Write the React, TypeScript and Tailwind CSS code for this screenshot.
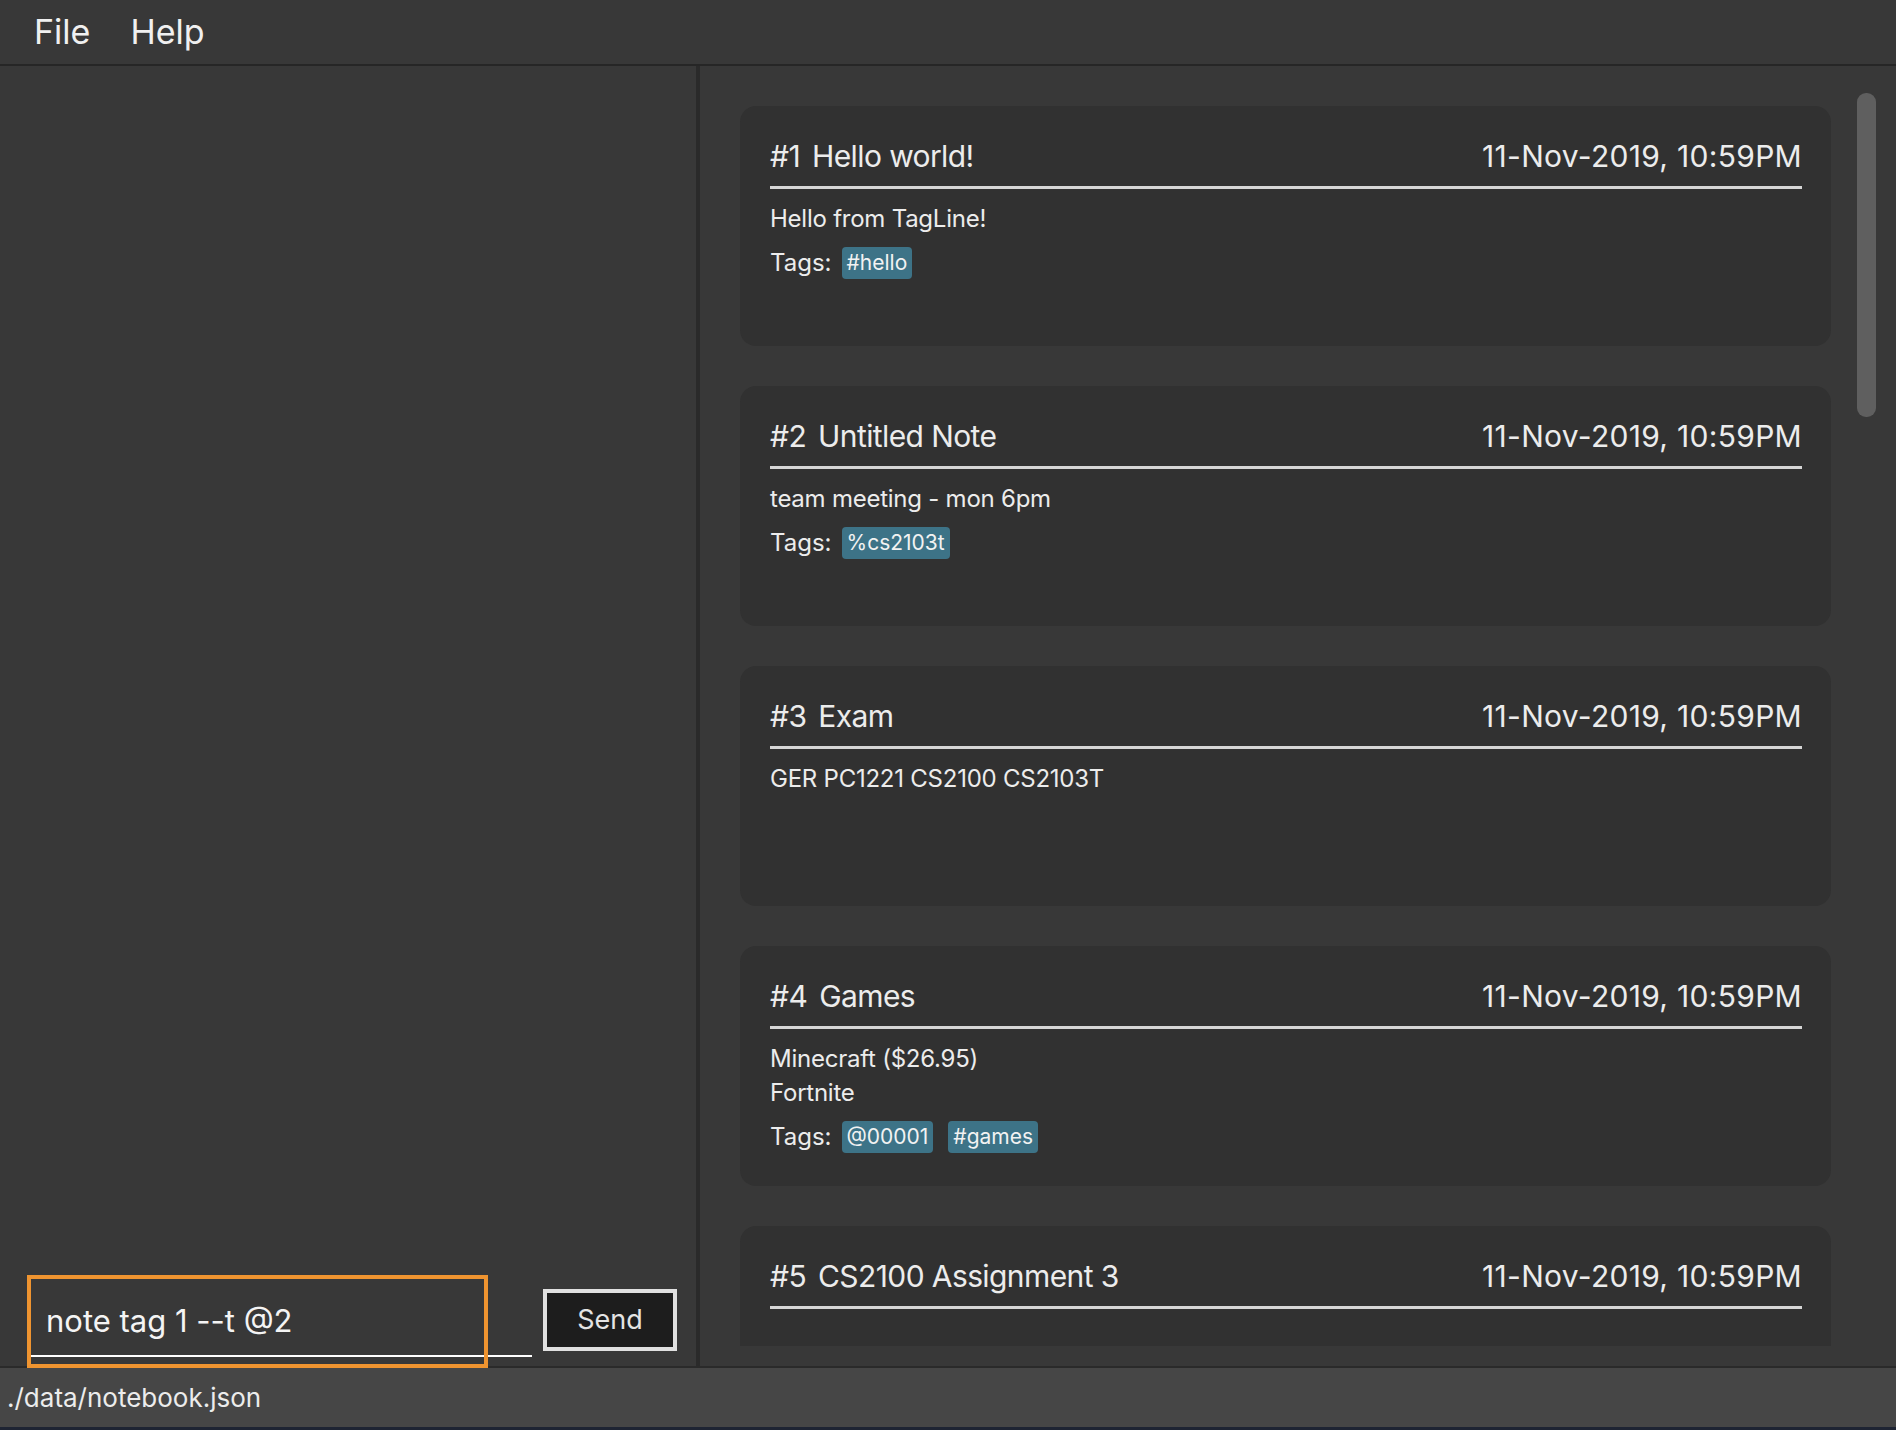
import React from "react";

type Note = {
  id: number;
  title: string;
  date: string;
  body: string[];
  tags: string[];
};

const notes: Note[] = [
  { id: 1, title: "Hello world!", date: "11-Nov-2019, 10:59PM", body: ["Hello from TagLine!"], tags: ["#hello"] },
  { id: 2, title: "Untitled Note", date: "11-Nov-2019, 10:59PM", body: ["team meeting - mon 6pm"], tags: ["%cs2103t"] },
  { id: 3, title: "Exam", date: "11-Nov-2019, 10:59PM", body: ["GER PC1221 CS2100 CS2103T"], tags: [] },
  { id: 4, title: "Games", date: "11-Nov-2019, 10:59PM", body: ["Minecraft ($26.95)", "Fortnite"], tags: ["@00001", "#games"] },
  { id: 5, title: "CS2100 Assignment 3", date: "11-Nov-2019, 10:59PM", body: [], tags: [] },
];

function NoteCard({ note }: { note: Note }) {
  return (
    <div className="w-[1091px] h-[240px] shrink-0 rounded-[16px] bg-[#313131] pt-[32px] pl-[30px] pr-[29px]">
      <div className="flex justify-between text-[30px] leading-[36px] text-[#ececec]">
        <span className="flex tracking-[-0.02em]">
          <span>#{note.id}</span>
          <span className="ml-[12px]">{note.title}</span>
        </span>
        <span className="tracking-[0.01em]">{note.date}</span>
      </div>
      <div className="mt-[12px] h-[3px] bg-[#d6d6d6]" />
      {note.body.length > 0 && (
        <div className="mt-[13px] text-[24px] leading-[34px] text-[#ececec] tracking-[-0.01em]">
          {note.body.map((l, i) => (
            <div key={i}>{l}</div>
          ))}
        </div>
      )}
      {note.tags.length > 0 && (
        <div className="mt-[11px] flex items-center h-[32px] text-[24px] text-[#ececec]">
          <span className="mr-[10px]">Tags:</span>
          <div className="flex gap-[15px]">
            {note.tags.map((t) => (
              <span
                key={t}
                className="h-[32px] px-[5px] rounded-[4px] bg-[#3d7387] text-[21px] leading-[32px] text-[#f2f2f2]"
              >
                {t}
              </span>
            ))}
          </div>
        </div>
      )}
    </div>
  );
}

export default function App() {
  return (
    <div className="relative w-[1896px] h-[1430px] flex flex-col bg-[#383838] overflow-hidden font-['Inter',_'Noto_Sans',_sans-serif] text-[#ececec]">
      {/* menu bar */}
      <div className="h-[64px] shrink-0 flex items-center pl-[34px] gap-[40px] text-[34px] leading-[40px] text-[#f0f0f0]">
        <span>File</span>
        <span>Help</span>
      </div>
      <div className="h-[2px] shrink-0 bg-[#262626]" />

      {/* main */}
      <div className="flex flex-1 min-h-0">
        {/* left pane */}
        <div className="w-[696px] shrink-0 flex flex-col justify-end">
          <div className="flex items-end pl-[27px] pb-[9px]">
            <div className="w-[505px] h-[80px] border-b-2 border-white">
              <div className="mt-[25px] pl-[19px] text-[31px] leading-[38px] text-[#f4f4f4]">
                note tag 1 --t @2
              </div>
            </div>
            <button className="ml-[11px] mb-[6px] w-[134px] h-[62px] border-4 border-[#e0e0e0] bg-[#1d1d1d] text-[27px] text-[#e4e4e4] flex items-center justify-center">
              Send
            </button>
          </div>
        </div>
        <div className="w-[4px] shrink-0 bg-[#2a2a2a]" />

        {/* right pane */}
        <div className="flex-1 flex min-w-0">
          <div className="flex flex-col pl-[40px] pt-[40px] pb-[20px]">
            <div className="flex-1 min-h-0 overflow-hidden flex flex-col gap-[40px]">
              {notes.map((n) => (
                <NoteCard key={n.id} note={n} />
              ))}
            </div>
          </div>
          <div className="ml-[26px] mt-[27px] w-[19px] h-[324px] rounded-[9px] bg-[#5f5f5f]" />
        </div>
      </div>

      <div className="h-[2px] shrink-0 bg-[#2a2a2a]" />
      {/* status bar */}
      <div className="h-[59px] shrink-0 bg-[#464646] flex items-center pl-[7px] text-[26px] leading-[32px] text-[#ececec]">
        ./data/notebook.json
      </div>
      <div className="h-[3px] shrink-0 bg-[#1e2433]" />

      {/* highlight annotation */}
      <div className="absolute left-[27px] top-[1275px] w-[461px] h-[93px] border-4 border-[#ef9430] pointer-events-none" />
    </div>
  );
}
